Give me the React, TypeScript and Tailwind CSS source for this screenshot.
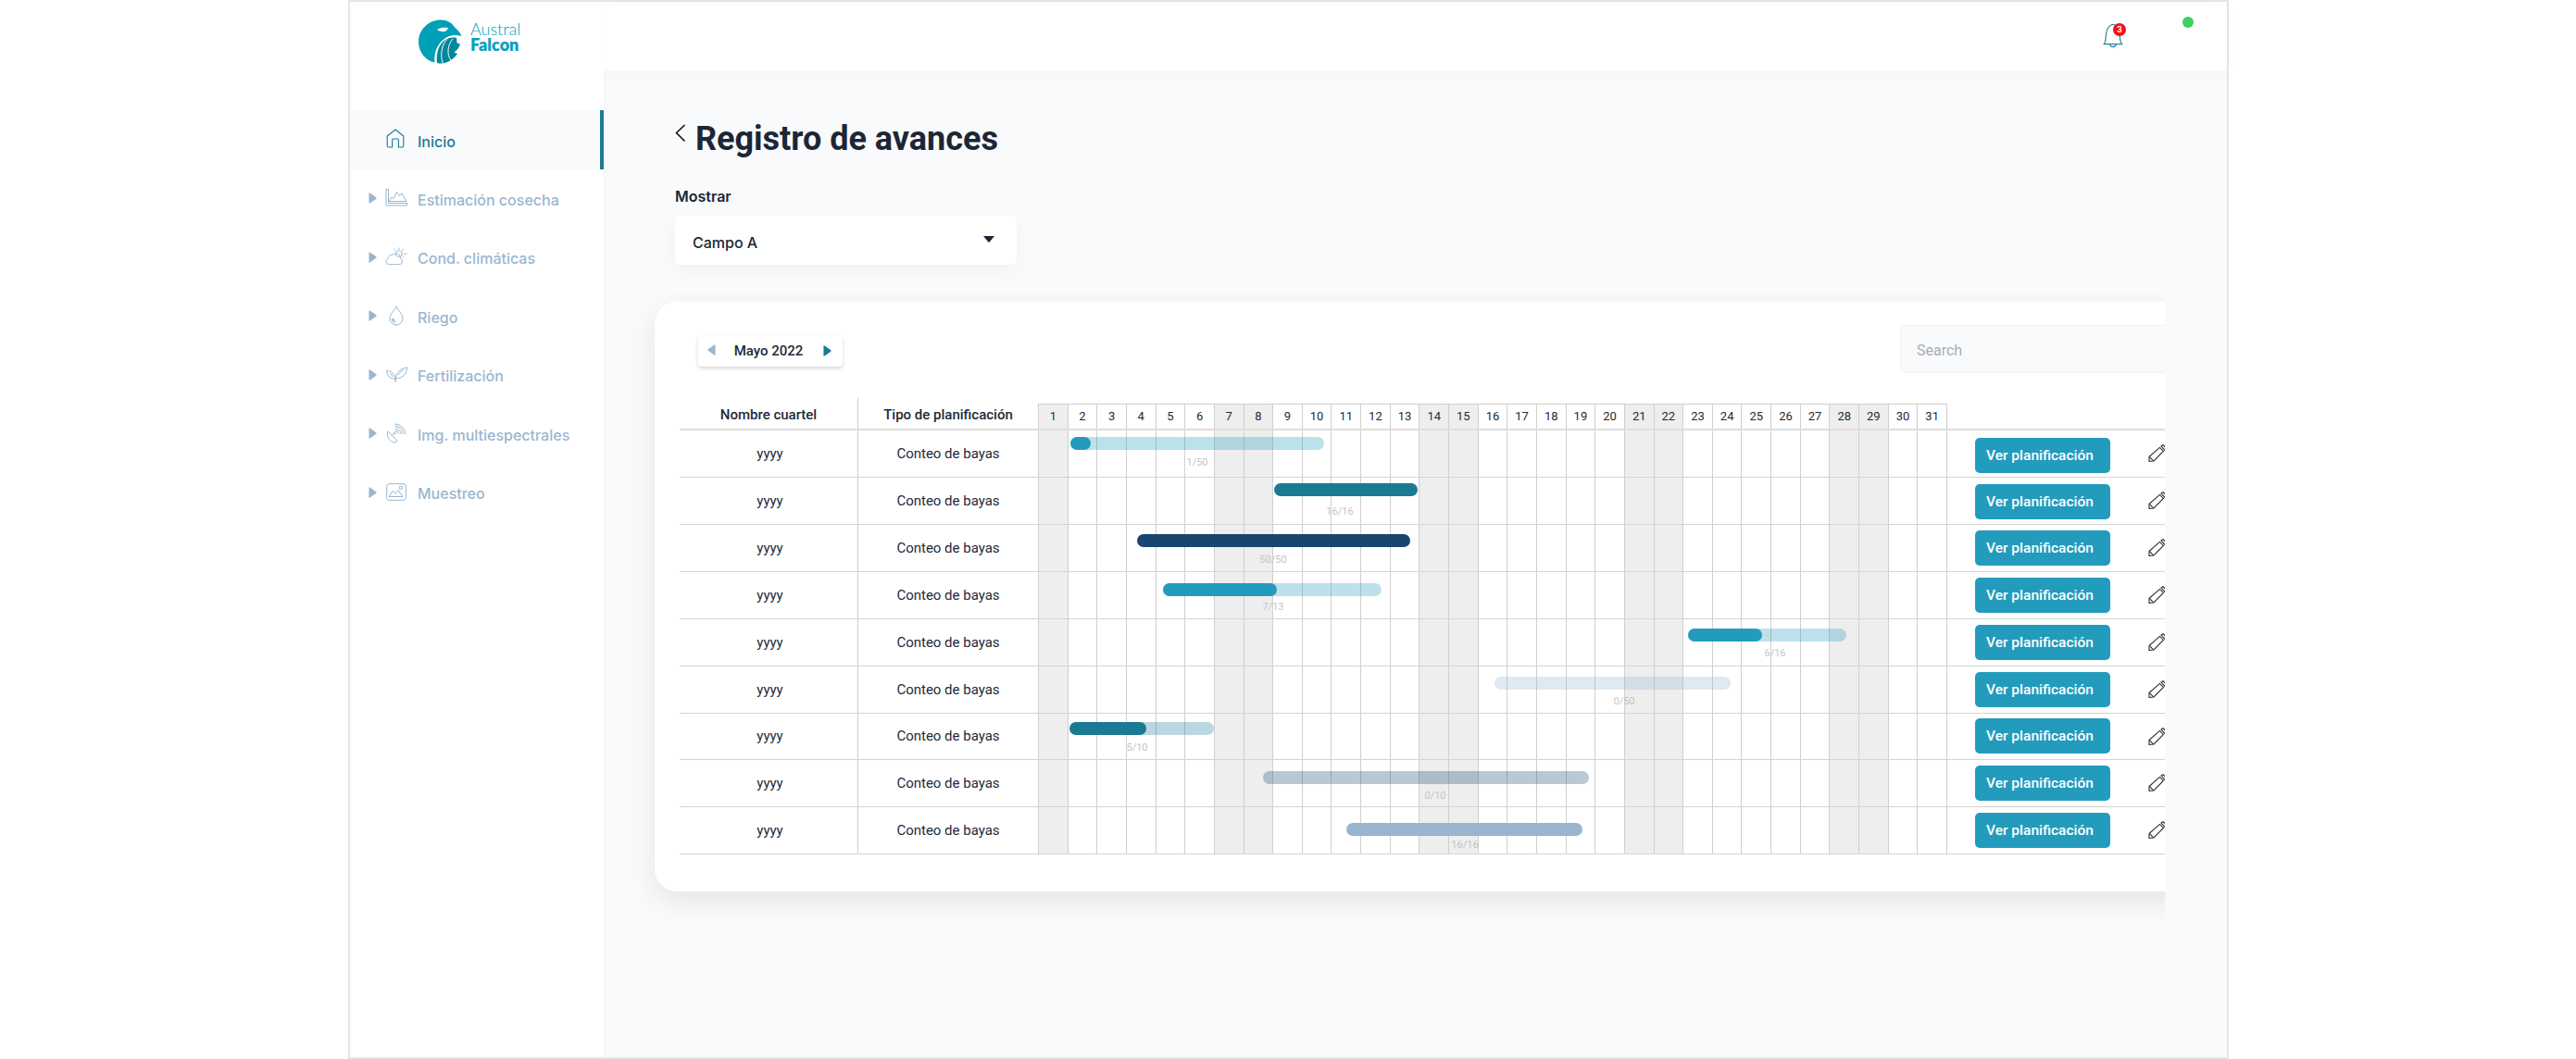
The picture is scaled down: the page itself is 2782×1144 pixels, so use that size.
import React from "react";

const C = "#9ab6d0";

const IconHome = () => (
  <svg width="20" height="21" viewBox="0 0 20 21" fill="none" stroke="#1a7a94" strokeWidth="1.1" strokeLinejoin="round">
    <path d="M1.2 8 L10 1 L18.8 8 V18.4 a1.6 1.6 0 0 1 -1.6 1.6 H13.4 V12.6 a1.6 1.6 0 0 0 -1.6 -1.6 H8.2 a1.6 1.6 0 0 0 -1.6 1.6 V20 H2.8 a1.6 1.6 0 0 1 -1.6 -1.6 Z" />
  </svg>
);
const IconChart = () => (
  <svg width="24" height="19" viewBox="0 0 24 19" fill="none" stroke={C} strokeWidth="1">
    <path d="M1 0.5 V18 H23.5 V15.5 H3.5 V0.5 Z" />
    <path d="M4 13.5 L7 9 L9 10.5 L12.5 3.5 L15 7.5 L18 5 L23 13.5 Z" strokeLinejoin="round" />
  </svg>
);
const IconCloud = () => (
  <svg width="25" height="20" viewBox="0 0 25 20" fill="none" stroke={C} strokeWidth="1" strokeLinecap="round">
    <path d="M4 19 a3.3 3.3 0 0 1 -1 -6.4 a5 5 0 0 1 5 -4.4 a5.6 5.6 0 0 1 6 -1 a4 4 0 0 1 3 5.2 a3.4 3.4 0 0 1 -1 6.6 Z" />
    <circle cx="15.5" cy="7" r="3.6" />
    <path d="M15.5 0.5 V2 M21.5 7 H24 M10 1.5 L11.2 3 M20.5 2 L19.4 3.2 M20.5 11.5 L19.6 10.6" />
  </svg>
);
const IconDrop = () => (
  <svg width="16" height="22" viewBox="0 0 16 22" fill="none" stroke={C} strokeWidth="1">
    <path d="M8 1 C6.5 5 1 9 1 14 a7 7 0 0 0 14 0 C15 9 9.5 5 8 1 Z" />
    <path d="M3.6 14 a4.4 4.4 0 0 0 4 4.2 M4.4 14.4 l2 2" strokeWidth="1.3" />
  </svg>
);
const IconLeaf = () => (
  <svg width="23" height="17" viewBox="0 0 23 17" fill="none" stroke={C} strokeWidth="1" strokeLinejoin="round">
    <path d="M10 16.5 C10 12 9.6 10 8 8 C6 5.4 3 4.4 0.7 4.4 C0.7 8 2.4 11 5 12.2 C6.6 13 8.4 13 10 13" />
    <path d="M10.3 16.5 C10 9 12.5 3 22.5 0.8 C22.4 7 19 12.6 10.6 13" />
    <path d="M12.6 9 C15 6 17 4.8 19 3.8 M4 7 L8 11" />
  </svg>
);
const IconDish = () => (
  <svg width="22" height="22" viewBox="0 0 22 22" fill="none" stroke={C} strokeWidth="1">
    <path d="M1.8 9 C0 13.5 3 20.5 9.5 21 C10.5 20.6 11.5 19.8 12 19 Z" strokeLinejoin="round" />
    <path d="M5.8 14 L9 11" />
    <circle cx="9.4" cy="10.6" r="1" />
    <path d="M10 5.8 a6.2 6.2 0 0 1 6 6 M9.6 3.4 a8.8 8.8 0 0 1 8.8 8.6 M9 1 a11.6 11.6 0 0 1 12 11.4" />
    <path d="M10 8 a4 4 0 0 1 3.8 3.8" />
  </svg>
);
const IconImage = () => (
  <svg width="22" height="19" viewBox="0 0 22 19" fill="none" stroke={C} strokeWidth="1">
    <rect x="0.7" y="0.7" width="20.6" height="17.6" rx="2.4" />
    <path d="M3 14.5 L7 8.5 L10 11 L13 7.5 L18 14.5 Z" strokeLinejoin="round" />
    <circle cx="16" cy="4.8" r="1.7" />
  </svg>
);

const Tri = ({ cls }: { cls: string }) => (
  <svg width="9" height="12" viewBox="0 0 8 11" className={cls}>
    <path d="M0.3 1 Q0.3 0 1.3 0.5 L7.5 4.8 Q8 5.5 7.5 6.2 L1.3 10.5 Q0.3 11 0.3 10 Z" fill="currentColor" />
  </svg>
);

const Logo = () => (
  <svg width="47" height="48" viewBox="0 0 47 48">
    <path d="M24 0.5 C31 0.5 36 3.5 39 8.5 C42 11 45 14 46.5 18 C39 16 32 17 26 22.5 C19.5 28.5 16.5 37 17.5 46.5 C7.5 44.5 0 35 0 24 C0 11 11 0.5 24 0.5 Z" fill="#00a0b8" />
    <path d="M20 11 C23.5 8.6 28 8.4 32 9 C31 12 29 13.2 27 13.2 C24.6 13.2 22 12.6 20 11 Z" fill="#fff" />
    <path d="M41 20 C34 18.5 28 21.5 24 27 C20.5 32 19 39 20 47 C21 47.4 23 47.6 24.5 47.5 C32 47 38 43 42 37 L38.5 35.5 C42 33 44 30 45 26.5 L41.5 25.5 Z" fill="#00889c" />
    <path d="M31 21.5 C25.5 26 23 37 26 47 M37 21 C31.5 27 30 38 35 44" stroke="#fff" strokeWidth="1" fill="none" />
  </svg>
);

const IconBell = () => (
  <svg width="22" height="27" viewBox="0 0 22 27" fill="none" stroke="#2a84a0" strokeWidth="1.2" strokeLinejoin="round">
    <path d="M1 21.6 C2.8 20 3 18 3.2 14 C3.4 8.5 5 3 9 1 C10 0.4 11.6 0.4 12.8 1 C16.5 3 18.2 8.5 18.4 14 C18.6 18 19 20 21 21.6 Z" />
    <path d="M7.6 21.8 C8 25.6 13.6 25.6 14.2 21.8" />
  </svg>
);

const Pencil = () => (
  <svg width="22" height="20" viewBox="0 0 22 20" fill="none" stroke="#2b2f36" strokeWidth="1.1" strokeLinejoin="miter" className="shrink-0">
    <path d="M1 13.5 L12.4 3.4 L16.4 7.4 L6 18 L1 18.4 Z" />
    <path d="M1.6 13.6 L5.6 17.8" />
    <path d="M14 2 L16 0.6 L20 4.6 L18 6.4 Z" />
  </svg>
);

const nav = [
  { label: "Estimación cosecha", icon: <IconChart /> },
  { label: "Cond. climáticas", icon: <IconCloud /> },
  { label: "Riego", icon: <IconDrop /> },
  { label: "Fertilización", icon: <IconLeaf /> },
  { label: "Img. multiespectrales", icon: <IconDish /> },
  { label: "Muestreo", icon: <IconImage /> },
];

const weekend = [1, 7, 8, 14, 15, 21, 22, 28, 29];
const days = Array.from({ length: 31 }, (_, i) => i + 1);

type Row = {
  h: number; top: number; x: number; end: number; darkEnd: number;
  dark: string; light: string; label: string; lx: number; ly: number; btn: number;
};
const rows: Row[] = [
  { h: 51, top: 7, x: 1156, end: 1430, darkEnd: 1178, dark: "bg-[#229bbd]", light: "bg-[#229bbd]/30", label: "1/50", lx: 1293, ly: 34, btn: 9 },
  { h: 51, top: 6, x: 1376, end: 1531, darkEnd: 1531, dark: "bg-[#1a7a94]", light: "bg-[#1a7a94]", label: "16/16", lx: 1447, ly: 36, btn: 8 },
  { h: 51, top: 10, x: 1228, end: 1523, darkEnd: 1523, dark: "bg-[#1a4571]", light: "bg-[#1a4571]", label: "50/50", lx: 1375, ly: 37, btn: 7 },
  { h: 51, top: 12, x: 1256, end: 1492, darkEnd: 1379, dark: "bg-[#229bbd]", light: "bg-[#229bbd]/30", label: "7/13", lx: 1375, ly: 37, btn: 7 },
  { h: 51, top: 10, x: 1823, end: 1994, darkEnd: 1903, dark: "bg-[#229bbd]", light: "bg-[#229bbd]/30", label: "6/16", lx: 1917, ly: 36, btn: 7 },
  { h: 51, top: 11, x: 1614, end: 1869, darkEnd: 1614, dark: "bg-[#229bbd]", light: "bg-[#98b4cf]/30", label: "0/50", lx: 1754, ly: 37, btn: 7 },
  { h: 50, top: 9, x: 1155, end: 1311, darkEnd: 1238, dark: "bg-[#1a7a94]", light: "bg-[#1a7a94]/30", label: "5/10", lx: 1228, ly: 36, btn: 6 },
  { h: 51, top: 12, x: 1364, end: 1716, darkEnd: 1364, dark: "bg-[#229bbd]", light: "bg-[#1a4571]/30", label: "0/10", lx: 1550, ly: 38, btn: 7 },
  { h: 51, top: 17, x: 1454, end: 1709, darkEnd: 1709, dark: "bg-[#98b4cf]", light: "bg-[#98b4cf]", label: "16/16", lx: 1582, ly: 40, btn: 7 },
];
const GX = 1121;

export default function App() {
  return (
    <div className="w-[2782px] h-[1144px] bg-white overflow-hidden font-['Inter',sans-serif] text-[#1e2a3a]">
      <div className="ml-[376px] w-[2031px] h-[1144px] border-2 border-[#e5e5e5] flex">
        {/* Sidebar */}
        <aside className="w-[274px] shrink-0 flex flex-col bg-white relative z-10 shadow-[2px_0_8px_rgba(0,0,0,0.015)]">
          <div className="h-[117px] shrink-0 flex items-start pl-[74px] pt-[19px] gap-[9px]">
            <Logo />
            <div className="flex flex-col text-[#00a0b8] pt-[1px]">
              <span className="text-[18px] leading-[18px] font-['Lato',sans-serif] font-light">Austral</span>
              <span className="text-[18px] leading-[17px] font-['Lato',sans-serif] font-extrabold">Falcon</span>
            </div>
          </div>
          <div className="h-[64px] flex items-center bg-[#f9fafc] border-r-[4px] border-[#1a7a94] pl-[39px]">
            <span className="-mt-[4px]"><IconHome /></span>
            <span className="ml-[14px] mt-[3px] text-[16px] font-medium text-[#1a7a94]">Inicio</span>
          </div>
          <div className="mt-[1px] flex flex-col">
            {nav.map((n) => (
              <div key={n.label} className="h-[63.5px] flex items-center pl-[20px]">
                <Tri cls="text-[#9ab6d0] -mt-[3px]" />
                <span className="w-[24px] ml-[9px] flex justify-center -mt-[4px]">{n.icon}</span>
                <span className="ml-[11px] text-[16px] font-medium text-[#9ab6d0]">{n.label}</span>
              </div>
            ))}
          </div>
        </aside>

        {/* Main */}
        <div className="flex-1 flex flex-col bg-[#f9fafc] min-w-0">
          <header className="h-[74px] shrink-0 bg-white flex items-start justify-end pr-[36px] gap-[64px] shadow-[0_4px_20px_rgba(0,0,0,0.025)] relative">
            <div className="relative mt-[24px] w-[22px]">
              <IconBell />
              <span className="absolute -top-[1px] left-[11px] w-[14px] h-[14px] rounded-full bg-[#f50f14] text-white text-[9px] font-bold leading-[14px] text-center">3</span>
            </div>
            <span className="mt-[16px] w-[12px] h-[12px] rounded-full bg-[#3ecf5e]" />
          </header>

          <div className="pl-[77px]">
            <div className="mt-[52px] flex items-center h-[44px]">
              <svg width="12" height="20" viewBox="0 0 12 20" fill="none" stroke="#111" strokeWidth="1.6" className="-mt-[12px]">
                <path d="M10.5 1 L1.5 9.5 L10.5 18.5" />
              </svg>
              <h1 className="ml-[10px] text-[36px] leading-[44px] font-bold text-[#1c2735] font-['Roboto',sans-serif]">Registro de avances</h1>
            </div>
            <div className="mt-[28px] text-[16px] leading-[24px] font-semibold text-[#1c2735]">Mostrar</div>
            <div className="mt-[9px] w-[369px] h-[53px] bg-white rounded-[6px] shadow-[0_6px_20px_rgba(0,0,0,0.04)] flex items-center justify-between pl-[19px] pr-[24px]">
              <span className="text-[16px] font-medium mt-[4px] text-[#1c2735]">Campo A</span>
              <svg width="12" height="7" viewBox="0 0 12 7" className="-mt-[2px]"><path d="M0 0 H12 L6.6 6.6 Q6 7 5.4 6.6 Z" fill="#1c2735" /></svg>
            </div>
          </div>

          {/* Card clip */}
          <div className="mt-[30px] w-[1686px] pl-[55px] pt-[10px] pb-[60px] overflow-hidden">
            <div className="w-[1680px] h-[637px] bg-white rounded-[24px] shadow-[0_10px_30px_rgba(0,0,0,0.09)] pl-[27px] pt-[25px] font-['Roboto',sans-serif]">
              <div className="flex justify-between items-start h-[52px]">
                <div className="ml-[20px] mt-[11px] w-[156px] h-[34px] bg-white rounded-[4px] shadow-[0_2px_4px_rgba(0,0,0,0.16)] flex items-center justify-between pl-[10px] pr-[12px]">
                  <Tri cls="text-[#9ab6d0] rotate-180 -mt-[2px]" />
                  <span className="text-[15px] font-medium text-[#1e2a3a] -ml-[2px]">Mayo 2022</span>
                  <Tri cls="text-[#1a7a94]" />
                </div>
                <div className="w-[335px] h-[52px] bg-[#f9fafc] border border-[#f0f1f3] rounded-[6px] pl-[17px] pt-[4px] flex items-center text-[16px] text-[#a9adb3]">Search</div>
              </div>

              {/* Table header */}
              <div className="mt-[27px] flex h-[35px] border-b-2 border-[#dedede]">
                <div className="w-[192px] shrink-0 flex items-center justify-center text-[15px] font-medium pt-[4px]">Nombre cuartel</div>
                <div className="w-[195px] shrink-0 flex items-center justify-center text-[15px] font-medium pt-[4px] border-l border-[#cfcfcf]">Tipo de planificación</div>
                <div className="w-[982px] shrink-0 mt-[6px] grid grid-cols-[repeat(31,minmax(0,1fr))] border-t border-r border-[#cfcfcf]">
                  {days.map((d) => (
                    <div key={d} className={`border-l border-[#cfcfcf] flex items-center justify-center text-[13px] text-[#1e2a3a] ${weekend.includes(d) ? "bg-[#eeeeee]" : ""}`}>{d}</div>
                  ))}
                </div>
              </div>

              {/* Rows */}
              {rows.map((r, i) => (
                <div key={i} style={{ height: r.h }} className="flex border-b border-[#d4d4d4]">
                  <div className="w-[192px] shrink-0 flex items-center justify-center text-[15px] pl-[3px]">yyyy</div>
                  <div className="w-[195px] shrink-0 flex items-center justify-center text-[15px] border-l border-[#cfcfcf]">Conteo de bayas</div>
                  <div className="w-[982px] shrink-0 relative grid grid-cols-[repeat(31,minmax(0,1fr))] border-r border-[#cfcfcf]">
                    {days.map((d) => (
                      <div key={d} className={`border-l border-[#cfcfcf] ${weekend.includes(d) ? "bg-[#eeeeee]" : ""}`} />
                    ))}
                    <div style={{ left: r.x - GX, width: r.end - r.x, top: r.top }} className={`absolute h-[14px] rounded-[7px] ${r.light}`} />
                    {r.darkEnd > r.x && r.darkEnd < r.end && (
                      <div style={{ left: r.x - GX, width: r.darkEnd - r.x, top: r.top }} className={`absolute h-[14px] rounded-[7px] ${r.dark}`} />
                    )}
                    <span style={{ left: r.lx - GX, top: r.ly }} className="absolute -translate-x-1/2 -translate-y-1/2 text-[11px] leading-none text-[#c4c4c4]">{r.label}</span>
                  </div>
                  <div className="pl-[30px] flex items-center gap-[41px] h-full relative">
                    <button style={{ marginTop: (r.btn - 7) * 2 }} className="w-[146px] h-[38px] bg-[#229bbd] rounded-[5px] text-white text-[15.5px] font-medium flex items-center justify-center pt-[2px] pr-[6px]">Ver planificación</button>
                    <Pencil />
                  </div>
                </div>
              ))}
            </div>
          </div>
        </div>
      </div>
    </div>
  );
}
